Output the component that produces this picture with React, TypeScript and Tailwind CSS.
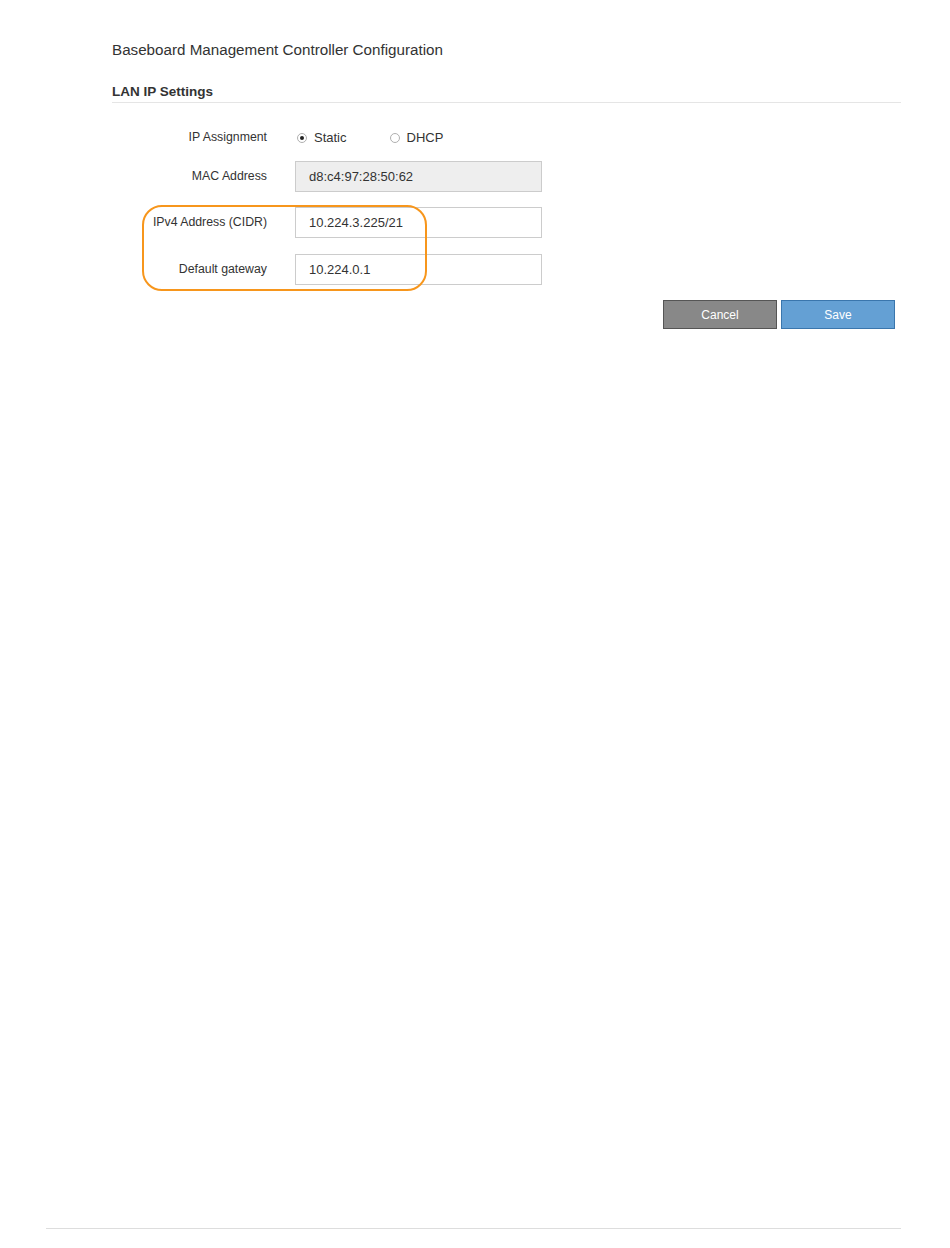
import React from 'react';

const Radio: React.FC<{ checked?: boolean; label: string }> = ({ checked, label }) => (
  <label className="flex items-center gap-[7px] text-[13px] text-[#333]">
    <span className="w-[10px] h-[10px] rounded-full border border-[#b0b0b0] bg-white flex items-center justify-center">
      {checked && <span className="w-[4px] h-[4px] rounded-full bg-[#222]" />}
    </span>
    {label}
  </label>
);

const Row: React.FC<{ label: string; className?: string; children: React.ReactNode }> = ({ label, className, children }) => (
  <div className={`flex items-center gap-[28px] ${className ?? ''}`}>
    <div className="w-[155px] text-right text-[12.3px] text-[#333]">{label}</div>
    {children}
  </div>
);

const Field: React.FC<{ value: string; disabled?: boolean }> = ({ value, disabled }) => (
  <div
    className={`w-[247px] h-[31px] border border-[#ccc] pl-[13px] flex items-center text-[13px] text-[#333] ${disabled ? 'bg-[#eee]' : 'bg-white'}`}
  >
    {value}
  </div>
);

export default function App() {
  return (
    <div className="h-[1248px] flex flex-col bg-white font-['Liberation_Sans',Arial,sans-serif]">
      <div className="pl-[112px] pr-[49px] pt-[41px]">
        <h1 className="text-[15.2px] leading-[17px] text-[#333]">Baseboard Management Controller Configuration</h1>

        <h2 className="mt-[26px] pb-[2px] border-b border-[#e5e5e5] text-[13.5px] leading-[16px] font-bold text-[#333]">
          LAN IP Settings
        </h2>

        <Row label="IP Assignment" className="mt-[19px] h-[31px]">
          <div className="flex items-center gap-[43px] pl-[2px]">
            <Radio checked label="Static" />
            <Radio label="DHCP" />
          </div>
        </Row>

        <Row label="MAC Address" className="mt-[8px]">
          <Field value="d8:c4:97:28:50:62" disabled />
        </Row>

        <div className="relative mt-[15px]">
          <Row label="IPv4 Address (CIDR)">
            <Field value="10.224.3.225/21" />
          </Row>
          <Row label="Default gateway" className="mt-[16px]">
            <Field value="10.224.0.1" />
          </Row>
          <div className="absolute left-[30px] top-[-2px] w-[285px] h-[86px] border-2 border-[#f7961c] rounded-[20px] pointer-events-none" />
        </div>

        <div className="mt-[15px] flex justify-end gap-[4px] pr-[6px]">
          <button className="w-[114px] h-[29px] bg-[#888] border border-[#555] text-white text-[12px]">Cancel</button>
          <button className="w-[114px] h-[29px] bg-[#64a0d4] border border-[#3a76ad] text-white text-[12px]">Save</button>
        </div>
      </div>

      <div className="mt-auto mb-[19px] ml-[46px] mr-[49px] border-t border-[#ddd]" />
    </div>
  );
}
